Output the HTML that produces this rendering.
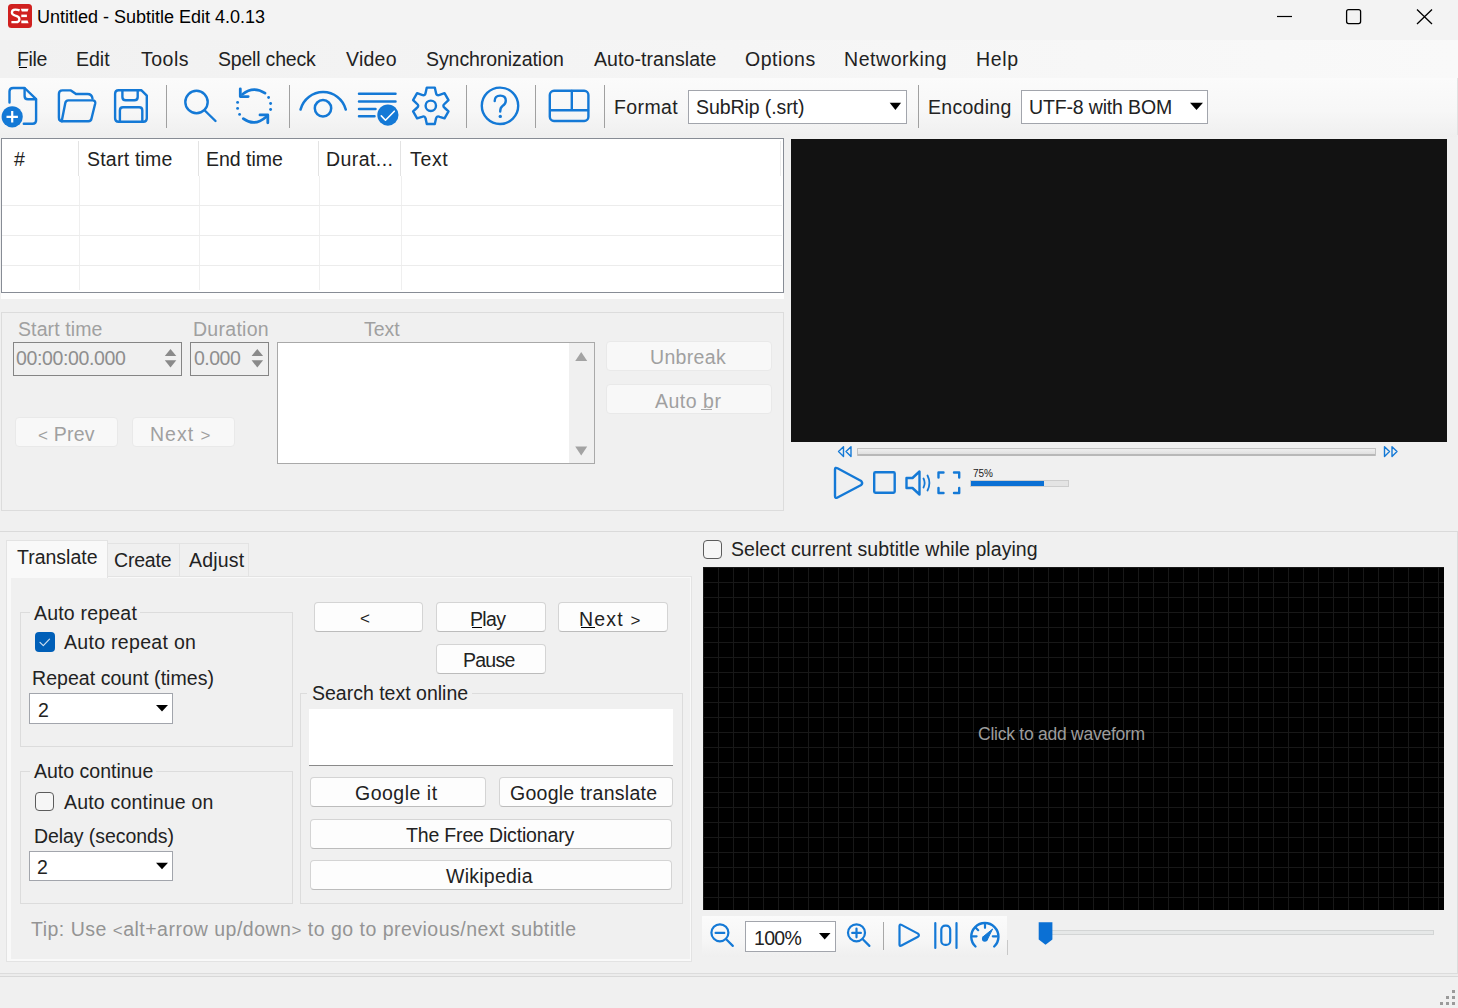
<!DOCTYPE html>
<html><head><meta charset="utf-8"><title>Untitled - Subtitle Edit 4.0.13</title>
<style>
html,body{margin:0;padding:0}
body{width:1458px;height:1008px;overflow:hidden;position:relative;background:#f0f0f0;font-family:"Liberation Sans",sans-serif}
.a{position:absolute;box-sizing:border-box}
.t{position:absolute;white-space:pre;line-height:20px;font-family:"Liberation Sans",sans-serif}
.btn{position:absolute;box-sizing:border-box;background:#fdfdfd;border:1px solid #d4d4d4;border-bottom-color:#bcbcbc;border-radius:4px}
.dbtn{position:absolute;box-sizing:border-box;background:#f8f8f8;border:1px solid #e9e9e9;border-radius:4px}
.grp{position:absolute;box-sizing:border-box;border:1px solid #dcdcdc}
.sep{position:absolute;width:1px;background:#a0a0a0}
.cmb{position:absolute;box-sizing:border-box;background:#fff;border:1px solid #a2a5ac}
svg{position:absolute;left:0;top:0;overflow:visible}
</style></head><body>
<!-- title bar -->
<div class="a" style="left:0;top:0;width:1458px;height:40px;background:#f3f3f3"></div>
<!-- menu bar -->
<div class="a" style="left:0;top:40px;width:1458px;height:38px;background:linear-gradient(to right,#f1f1f1,#f9f9f9)"></div>
<!-- toolbar -->
<div class="a" style="left:0;top:78px;width:1458px;height:59px;background:linear-gradient(#fbfbfb,#f7f7f7 55%,#efefef)"></div>
<div class="a" style="left:1457px;top:78px;width:1px;height:57px;background:#e2e2e2"></div>

<!-- toolbar separators -->
<div class="sep" style="left:166px;top:85px;height:43px"></div>
<div class="sep" style="left:289px;top:85px;height:43px"></div>
<div class="sep" style="left:466px;top:85px;height:43px"></div>
<div class="sep" style="left:535px;top:85px;height:43px"></div>
<div class="sep" style="left:604px;top:85px;height:43px"></div>
<div class="sep" style="left:918px;top:85px;height:43px"></div>
<!-- format / encoding combos -->
<div class="cmb" style="left:688px;top:90px;width:219px;height:34px"></div>
<div class="cmb" style="left:1021px;top:90px;width:187px;height:34px"></div>

<!-- subtitle list -->
<div class="a" style="left:1px;top:293px;width:783px;height:6px;background:#fdfdfd"></div>
<div class="a" style="left:1px;top:138px;width:783px;height:155px;background:#fff;border:1px solid #878c95"></div>
<div class="a" style="left:78px;top:141px;width:1px;height:35px;background:#e3e3e3"></div>
<div class="a" style="left:198px;top:141px;width:1px;height:35px;background:#e3e3e3"></div>
<div class="a" style="left:318px;top:141px;width:1px;height:35px;background:#e3e3e3"></div>
<div class="a" style="left:400px;top:141px;width:1px;height:35px;background:#e3e3e3"></div>
<div class="a" style="left:780px;top:141px;width:1px;height:35px;background:#ececec"></div>
<div class="a" style="left:79px;top:176px;width:1px;height:114px;background:#efefef"></div>
<div class="a" style="left:199px;top:176px;width:1px;height:114px;background:#efefef"></div>
<div class="a" style="left:319px;top:176px;width:1px;height:114px;background:#efefef"></div>
<div class="a" style="left:401px;top:176px;width:1px;height:114px;background:#efefef"></div>
<div class="a" style="left:2px;top:205px;width:780px;height:1px;background:#ececec"></div>
<div class="a" style="left:2px;top:235px;width:780px;height:1px;background:#ececec"></div>
<div class="a" style="left:2px;top:265px;width:780px;height:1px;background:#ececec"></div>

<!-- edit panel -->
<div class="grp" style="left:1px;top:312px;width:783px;height:199px"></div>
<div class="a" style="left:13px;top:342px;width:169px;height:34px;border:1px solid #858585"></div>
<div class="a" style="left:190px;top:342px;width:79px;height:34px;border:1px solid #858585"></div>
<div class="a" style="left:277px;top:342px;width:318px;height:122px;background:#fff;border:1px solid #a9a9a9"></div>
<div class="a" style="left:569px;top:343px;width:25px;height:120px;background:#f0f0f0"></div>
<div class="dbtn" style="left:606px;top:341px;width:166px;height:30px"></div>
<div class="dbtn" style="left:606px;top:384px;width:166px;height:30px"></div>
<div class="dbtn" style="left:15px;top:417px;width:103px;height:30px"></div>
<div class="dbtn" style="left:132px;top:417px;width:103px;height:30px"></div>

<!-- video -->
<div class="a" style="left:791px;top:139px;width:656px;height:303px;background:#121212"></div>
<div class="a" style="left:857px;top:448px;width:519px;height:8px;background:linear-gradient(#efefef,#e0e0e0);border:1px solid #c2c2c2;border-bottom:2px solid #b8b8b8;border-radius:1px"></div>
<div class="a" style="left:970px;top:480px;width:99px;height:7px;background:#e4e4e4;border:1px solid #cdcdcd"></div>
<div class="a" style="left:971px;top:481px;width:73px;height:5px;background:#0b70d4"></div>

<!-- splitter -->
<div class="a" style="left:0;top:531px;width:1458px;height:1px;background:#dadada"></div>
<div class="a" style="left:1457px;top:532px;width:1px;height:441px;background:#dcdcdc"></div>

<!-- tabs -->
<div class="a" style="left:107px;top:543px;width:73px;height:34px;background:#f0f0f0;border:1px solid #e3e3e3;border-bottom:none"></div>
<div class="a" style="left:179px;top:543px;width:70px;height:34px;background:#f0f0f0;border:1px solid #e3e3e3;border-bottom:none"></div>
<div class="a" style="left:6px;top:576px;width:686px;height:386px;background:#f9f9f9;border:1px solid #e3e3e3"></div>
<div class="a" style="left:6px;top:540px;width:102px;height:39px;background:#f9f9f9;border:1px solid #e3e3e3;border-bottom:none"></div>
<div class="a" style="left:11px;top:578px;width:679px;height:381px;background:#f0f0f0"></div>

<!-- groups -->
<div class="grp" style="left:20px;top:612px;width:273px;height:135px"></div>
<div class="grp" style="left:20px;top:771px;width:273px;height:133px"></div>
<div class="grp" style="left:300px;top:693px;width:383px;height:211px"></div>
<div class="a" style="left:30px;top:600px;width:110px;height:20px;background:#f0f0f0"></div>
<div class="a" style="left:30px;top:760px;width:126px;height:20px;background:#f0f0f0"></div>
<div class="a" style="left:307px;top:682px;width:165px;height:20px;background:#f0f0f0"></div>

<!-- checkboxes -->
<div class="a" style="left:35px;top:632px;width:19.5px;height:20px;background:#005fb8;border-radius:4px"></div>
<div class="a" style="left:35px;top:792px;width:19px;height:19px;background:#f6f6f6;border:1px solid #5c5c5c;border-radius:4px"></div>
<div class="a" style="left:703px;top:540px;width:19px;height:19px;background:#f6f6f6;border:1px solid #5c5c5c;border-radius:4px"></div>

<!-- combos -->
<div class="cmb" style="left:29px;top:693px;width:144px;height:31px"></div>
<div class="cmb" style="left:29px;top:851px;width:144px;height:30px"></div>

<!-- buttons -->
<div class="btn" style="left:314px;top:602px;width:109px;height:30px"></div>
<div class="btn" style="left:436px;top:602px;width:110px;height:30px"></div>
<div class="btn" style="left:558px;top:602px;width:110px;height:30px"></div>
<div class="btn" style="left:436px;top:644px;width:110px;height:30px"></div>
<div class="a" style="left:309px;top:709px;width:364px;height:57px;background:#fff;border-bottom:1px solid #8a8a8a"></div>
<div class="btn" style="left:310px;top:777px;width:176px;height:30px"></div>
<div class="btn" style="left:499px;top:777px;width:174px;height:30px"></div>
<div class="btn" style="left:310px;top:819px;width:362px;height:30px"></div>
<div class="btn" style="left:310px;top:860px;width:362px;height:30px"></div>

<!-- waveform -->
<div class="a" style="left:703px;top:567px;width:741px;height:343px;background-color:#000;background-image:repeating-linear-gradient(to right,#181818 0,#181818 1px,transparent 1px,transparent 15px),repeating-linear-gradient(to bottom,#181818 0,#181818 1px,transparent 1px,transparent 15px)"></div>
<div class="a" style="left:702px;top:916px;width:305px;height:41px;background:linear-gradient(#fbfbfb,#f6f6f6 60%,#efefef)"></div>
<div class="a" style="left:1007px;top:940px;width:1px;height:15px;background:#c8c8c8"></div>
<div class="cmb" style="left:745px;top:921px;width:91px;height:31px"></div>
<div class="a" style="left:883px;top:922px;width:1px;height:28px;background:#a8a8a8"></div>
<div class="a" style="left:1046px;top:930px;width:388px;height:5px;background:#e6e8e8;border:1px solid #d3d5d5"></div>

<!-- status bar -->
<div class="a" style="left:0;top:973px;width:1458px;height:1px;background:#dcdcdc"></div>
<div class="a" style="left:0;top:974px;width:1458px;height:2px;background:#ececec"></div>
<div class="a" style="left:0;top:976px;width:1458px;height:1px;background:#d8d8d8"></div>
<div class="a" style="left:0;top:977px;width:1458px;height:31px;background:#f0f0f0"></div>

<svg width="1458" height="1008" viewBox="0 0 1458 1008">
 <!-- app icon -->
 <rect x="8" y="4" width="24" height="24" rx="3.5" fill="#d0201f"/>
 <path d="M19.6 10.4 C18.4 9.9 16.9 9.7 15.2 9.7 C13.0 9.7 11.9 10.9 11.9 12.6 C11.9 14.4 13.4 15.2 15.4 15.7 C17.7 16.2 19.4 17.0 19.4 19.2 C19.4 21.2 17.9 22.2 15.8 22.2 L11.4 22.2" fill="none" stroke="#fff" stroke-width="2.3"/>
 <path d="M20.8 8.7 L28.6 8.7 L27.6 11.4 L21.8 11.4 Z" fill="#fff"/>
 <rect x="21.3" y="14.6" width="5.6" height="2.5" fill="#fff"/>
 <path d="M21.3 20.4 L27.6 20.4 L28.6 23.3 L21.3 23.3 Z" fill="#fff"/>

 <!-- window controls -->
 <line x1="1277" y1="16.5" x2="1292" y2="16.5" stroke="#000" stroke-width="1.2"/>
 <rect x="1346.6" y="9.6" width="14" height="14" rx="2" fill="none" stroke="#000" stroke-width="1.3"/>
 <path d="M1417 9.5 L1432 24 M1432 9.5 L1417 24" stroke="#000" stroke-width="1.3" fill="none"/>

 <!-- menu underline File -->
 <rect x="19" y="67" width="8" height="1" fill="#000"/>

 <g fill="none" stroke="#1479d6" stroke-width="2.4" stroke-linecap="round" stroke-linejoin="round">
  <!-- new -->
  <path d="M9.5 102.6 L9.5 91.6 Q9.5 88 13.1 88 L24.6 88 L36.1 99.2 L36.1 120.3 Q36.1 123.8 32.6 123.8 L23.8 123.8"/>
  <path d="M24.6 88.2 L24.6 96 Q24.6 99.3 27.9 99.3 L36 99.3"/>
  <!-- open -->
  <path d="M61.8 121.3 Q58.9 121 58.9 117.5 L58.9 94 Q58.9 90.4 62.5 90.4 L70.9 90.4 L76 94 L87.5 94 Q92 94 92.5 98.6"/>
  <path d="M62 121.3 L88.5 121.3 Q91 121.3 91.5 118.5 L95.2 103.5 Q95.8 100.4 92.6 100.4 L68.3 100.4 Q65.8 100.4 65.3 103 L61.8 120.8"/>
  <!-- save -->
  <path d="M118.6 90.3 L141.5 90.3 L146.8 95.6 L146.8 118.2 Q146.8 121.7 143.3 121.7 L118.6 121.7 Q115.1 121.7 115.1 118.2 L115.1 93.8 Q115.1 90.3 118.6 90.3 Z"/>
  <path d="M122.4 90.2 L122.4 97 Q122.4 100.3 125.7 100.3 L134.4 100.3 Q137.7 100.3 137.7 97 L137.7 90.2"/>
  <path d="M119.9 121.5 L119.9 110.4 Q119.9 107.3 123 107.3 L139.2 107.3 Q142.3 107.3 142.3 110.4 L142.3 121.5"/>
  <!-- search -->
  <circle cx="196.5" cy="102" r="11.2"/>
  <path d="M204.8 110.5 L215.5 121"/>
  <!-- sync -->
  <path d="M242.5 94.2 Q253.5 85.5 265 93.2" stroke-width="2.7"/>
  <path d="M240.3 88.8 L240.3 96.6 L248.2 96.6" stroke-width="2.8"/>
  <path d="M243.3 118.6 Q254.5 127 266 117" stroke-width="2.7"/>
  <path d="M260 114.9 L267.8 114.9 L267.8 122.8" stroke-width="2.8"/>
  <!-- eye -->
  <path d="M300.5 109.6 A23.4 23.4 0 0 1 345.8 109.6" stroke-width="2.5"/>
  <circle cx="323" cy="108.3" r="8.2" stroke-width="2.5"/>
  <!-- list check -->
  <path d="M359 93.7 L395.5 93.7 M359 101.4 L395.5 101.4 M359 109.1 L375.5 109.1 M359 116.3 L374.5 116.3" stroke-width="2.5"/>
  <!-- help -->
  <circle cx="500" cy="105.8" r="18.2"/>
  <path d="M494.7 101 Q494.7 95.6 500.3 95.6 Q505.8 95.6 505.8 100.8 Q505.8 104 502.5 106 Q500.2 107.6 500.2 111.5"/>
  <!-- layout -->
  <rect x="549.8" y="90.8" width="38.6" height="30.2" rx="4.2"/>
  <path d="M551 110.3 L588 110.3 M571.8 91 L571.8 110.3"/>
 </g>
 <!-- sync arrows and dots -->
 <g fill="#1479d6">
  <circle cx="237.6" cy="102.4" r="1.45"/><circle cx="237.6" cy="108.4" r="1.45"/><circle cx="239.6" cy="114.4" r="1.4"/>
  <circle cx="268.6" cy="97.5" r="1.4"/><circle cx="270.6" cy="103.5" r="1.45"/><circle cx="270.6" cy="109.5" r="1.45"/>
  <!-- new plus circle -->
  <circle cx="12.2" cy="116.8" r="10.6"/>
  <!-- list check circle -->
  <circle cx="387.9" cy="115.1" r="10.6"/>
  <!-- help dot -->
  <circle cx="500.3" cy="116.4" r="1.7"/>
 </g>
 <path d="M6.5 116.8 L17.9 116.8 M12.2 111.1 L12.2 122.5" stroke="#fff" stroke-width="2.2" fill="none"/>
 <path d="M381.3 115.9 L385.5 120.2 L394.3 111.2" stroke="#fff" stroke-width="1.6" fill="none" stroke-linecap="round" stroke-linejoin="round"/>
 <!-- gear -->
 <path fill="none" stroke="#1479d6" stroke-width="2.4" stroke-linejoin="round" d="M425.7 92.5 L426.8 87.6 L434.8 87.6 L435.9 92.5 Q436.4 96.2 439.7 94.8 L444.5 93.2 L448.5 100.2 L444.8 103.6 Q441.9 105.8 444.8 108.0 L448.5 111.4 L444.5 118.4 L439.7 116.8 Q436.4 115.4 435.9 119.1 L434.8 124.0 L426.8 124.0 L425.7 119.1 Q425.2 115.4 421.9 116.8 L417.1 118.4 L413.1 111.4 L416.8 108.0 Q419.7 105.8 416.8 103.6 L413.1 100.2 L417.1 93.2 L421.9 94.8 Q425.2 96.2 425.7 92.5 Z"/>
 <circle cx="430.8" cy="105.8" r="5.2" fill="none" stroke="#1479d6" stroke-width="2.4"/>

 <!-- combo arrows -->
 <path d="M889.7 102.7 L901.1 102.7 L895.4 109.9 Z" fill="#000"/>
 <path d="M1190 102.7 L1203 102.7 L1196.5 109.9 Z" fill="#000"/>
 <path d="M156 705 L168 705 L162 711.5 Z" fill="#000"/>
 <path d="M156 862.8 L168 862.8 L162 869.3 Z" fill="#000"/>
 <path d="M819 933 L830.5 933 L824.7 939.5 Z" fill="#000"/>

 <!-- spinner arrows -->
 <g fill="#8a8a8a">
  <path d="M164.8 356 L176.3 356 L170.5 349 Z"/><path d="M164.8 360.3 L176.3 360.3 L170.5 367.6 Z"/>
  <path d="M251.6 356 L263.1 356 L257.3 349 Z"/><path d="M251.6 360.3 L263.1 360.3 L257.3 367.6 Z"/>
 </g>
 <g fill="#a3a3a3">
  <path d="M575.2 360.9 L587.2 360.9 L581.2 352 Z"/><path d="M575.2 446.6 L587.2 446.6 L581.2 455.5 Z"/>
 </g>
 <!-- underline Auto br -->
 <rect x="701" y="409" width="11" height="1" fill="#a8a8a8"/>
 <!-- underline Play, Next -->
 <rect x="472" y="627" width="10" height="1" fill="#000"/>
 <rect x="581" y="627" width="14" height="1" fill="#000"/>

 <!-- video controls -->
 <g fill="none" stroke="#1479d6" stroke-width="1.4" stroke-linejoin="round">
  <path d="M838.5 451.5 L843.5 446.8 L843.5 456.5 Z M846 451.5 L851 446.8 L851 456.5 Z"/>
  <path d="M1397 451.5 L1392 446.8 L1392 456.5 Z M1389.5 451.5 L1384.5 446.8 L1384.5 456.5 Z"/>
 </g>
 <g fill="none" stroke="#1479d6" stroke-width="2.4" stroke-linejoin="round" stroke-linecap="round">
  <path d="M835 469.5 Q835 467 837.5 468.3 L861.2 481 Q863.2 483 861.2 485 L837.5 497.5 Q835 498.8 835 496 Z"/>
  <rect x="874.2" y="472.2" width="20.5" height="20.6" rx="1.2"/>
  <path d="M906.5 478 L912.5 478 L919.5 471.5 L919.5 494.5 L912.5 488 L906.5 488 Z"/>
  <path d="M923.5 478.5 Q925.8 483 923.5 487.5 M927.5 475.5 Q931.3 483 927.5 490.5" stroke-width="1.8"/>
  <path d="M938.5 477.5 L938.5 472.5 L943.5 472.5 M954 472.5 L959.2 472.5 L959.2 477.5 M959.2 488 L959.2 493 L954 493 M943.5 493 L938.5 493 L938.5 488"/>
 </g>

 <!-- checkmark auto repeat -->
 <path d="M40 642.3 L43.3 645.6 L49.5 639.2" stroke="#fff" stroke-opacity="0.8" stroke-width="1.2" fill="none" stroke-linecap="round" stroke-linejoin="round"/>

 <!-- waveform toolbar icons -->
 <g fill="none" stroke="#1479d6" stroke-width="2.2" stroke-linecap="round" stroke-linejoin="round">
  <circle cx="719.9" cy="932.8" r="8.5"/>
  <path d="M726.2 939.3 L732.8 945.9 M715.6 932.9 L724.3 932.9"/>
  <circle cx="856.5" cy="932.8" r="8.5"/>
  <path d="M862.8 939.3 L869.4 945.9 M852.2 932.9 L860.9 932.9 M856.5 928.5 L856.5 937.3"/>
  <path d="M899.5 926 Q899.5 923.8 901.5 924.9 L918 933.6 Q919.8 935.2 918 936.8 L901.5 945.5 Q899.5 946.6 899.5 944.4 Z"/>
  <path d="M935.3 923 L935.3 948"/>
  <path d="M956.5 923 L956.5 948"/>
  <rect x="941.3" y="925.6" width="8.9" height="19.3" rx="4"/>
  <path d="M975.5 946.5 A13.6 13.6 0 1 1 994.2 946.5" stroke-width="2.4"/>
  <path d="M985 924.8 L985 927.8 M972.6 936.3 L976.6 936.3 M992.8 936.3 L996.8 936.3 M976 928 L978.2 930.2" stroke-width="2.2"/>
 </g>
 <path d="M992.6 929 L986.9 940.5 L982.7 937.1 Z" fill="#1479d6" stroke="#1479d6" stroke-width="1" stroke-linejoin="round"/>
 <circle cx="984.8" cy="938.8" r="2.9" fill="#1479d6"/>
 <!-- slider thumb -->
 <path d="M1038.7 922.2 L1052.4 922.2 L1052.4 939.5 L1045.5 944.8 L1038.7 939.5 Z" fill="#0b70d4"/>
 <!-- grip -->
 <g fill="#9a9a9a">
  <rect x="1452" y="990" width="3" height="3"/>
  <rect x="1446" y="996" width="3" height="3"/><rect x="1452" y="996" width="3" height="3"/>
  <rect x="1440" y="1002" width="3" height="3"/><rect x="1446" y="1002" width="3" height="3"/><rect x="1452" y="1002" width="3" height="3"/>
 </g>
</svg>
<span class="t" style="left:37px;top:7px;font-size:18px;color:#000;">Untitled - Subtitle Edit 4.0.13</span>
<span class="t" style="left:17px;top:49px;font-size:19.5px;letter-spacing:-0.333px;color:#222;">File</span>
<span class="t" style="left:76px;top:49px;font-size:19.5px;color:#222;">Edit</span>
<span class="t" style="left:141px;top:49px;font-size:19.5px;letter-spacing:0.5px;color:#222;">Tools</span>
<span class="t" style="left:218px;top:49px;font-size:19.5px;letter-spacing:-0.2px;color:#222;">Spell check</span>
<span class="t" style="left:346px;top:49px;font-size:19.5px;letter-spacing:0.25px;color:#222;">Video</span>
<span class="t" style="left:426px;top:49px;font-size:19.5px;letter-spacing:-0.071px;color:#222;">Synchronization</span>
<span class="t" style="left:594px;top:49px;font-size:19.5px;letter-spacing:0.077px;color:#222;">Auto-translate</span>
<span class="t" style="left:745px;top:49px;font-size:19.5px;letter-spacing:0.5px;color:#222;">Options</span>
<span class="t" style="left:844px;top:49px;font-size:19.5px;letter-spacing:0.556px;color:#222;">Networking</span>
<span class="t" style="left:976px;top:49px;font-size:19.5px;letter-spacing:0.667px;color:#222;">Help</span>
<span class="t" style="left:614px;top:97px;font-size:19.5px;letter-spacing:0.4px;color:#222;">Format</span>
<span class="t" style="left:696px;top:97px;font-size:19.5px;letter-spacing:-0.083px;color:#222;">SubRip (.srt)</span>
<span class="t" style="left:928px;top:97px;font-size:19.5px;letter-spacing:0.286px;color:#222;">Encoding</span>
<span class="t" style="left:1029px;top:97px;font-size:19.5px;letter-spacing:-0.154px;color:#222;">UTF-8 with BOM</span>
<span class="t" style="left:14px;top:149px;font-size:19.5px;color:#222;">#</span>
<span class="t" style="left:87px;top:149px;font-size:19.5px;letter-spacing:0.222px;color:#222;">Start time</span>
<span class="t" style="left:206px;top:149px;font-size:19.5px;color:#222;">End time</span>
<span class="t" style="left:326px;top:149px;font-size:19.5px;letter-spacing:0.429px;color:#222;">Durat...</span>
<span class="t" style="left:410px;top:149px;font-size:19.5px;letter-spacing:0.667px;color:#222;">Text</span>
<span class="t" style="left:18px;top:319px;font-size:19.5px;letter-spacing:0.111px;color:#a0a0a0;">Start time</span>
<span class="t" style="left:193px;top:319px;font-size:19.5px;letter-spacing:0.286px;color:#a0a0a0;">Duration</span>
<span class="t" style="left:364px;top:319px;font-size:19.5px;color:#a0a0a0;">Text</span>
<span class="t" style="left:16px;top:348px;font-size:19.5px;letter-spacing:-0.364px;color:#8e8e8e;">00:00:00.000</span>
<span class="t" style="left:194px;top:348px;font-size:19.5px;letter-spacing:-0.5px;color:#8e8e8e;">0.000</span>
<span class="t" style="left:650px;top:347px;font-size:19.5px;letter-spacing:0.333px;color:#a0a0a0;">Unbreak</span>
<span class="t" style="left:655px;top:391px;font-size:19.5px;letter-spacing:0.5px;color:#a0a0a0;">Auto br</span>
<span class="t" style="left:38px;top:424px;font-size:19.5px;letter-spacing:0.2px;color:#a0a0a0;"><span style='font-size:17px'>&lt;</span> Prev</span>
<span class="t" style="left:150px;top:424px;font-size:19.5px;letter-spacing:1.0px;color:#a0a0a0;">Next <span style='font-size:17px'>&gt;</span></span>
<span class="t" style="left:973px;top:464px;font-size:10px;color:#222;">75%</span>
<span class="t" style="left:17px;top:547px;font-size:19.5px;color:#222;">Translate</span>
<span class="t" style="left:114px;top:550px;font-size:19.5px;letter-spacing:-0.2px;color:#222;">Create</span>
<span class="t" style="left:189px;top:550px;font-size:19.5px;letter-spacing:0.2px;color:#222;">Adjust</span>
<span class="t" style="left:34px;top:603px;font-size:19.5px;letter-spacing:0.2px;color:#222;">Auto repeat</span>
<span class="t" style="left:64px;top:632px;font-size:19.5px;letter-spacing:0.308px;color:#222;">Auto repeat on</span>
<span class="t" style="left:32px;top:668px;font-size:19.5px;letter-spacing:0.053px;color:#222;">Repeat count (times)</span>
<span class="t" style="left:38px;top:700px;font-size:19.5px;color:#222;">2</span>
<span class="t" style="left:34px;top:761px;font-size:19.5px;color:#222;">Auto continue</span>
<span class="t" style="left:64px;top:792px;font-size:19.5px;letter-spacing:0.2px;color:#222;">Auto continue on</span>
<span class="t" style="left:34px;top:826px;font-size:19.5px;letter-spacing:-0.071px;color:#222;">Delay (seconds)</span>
<span class="t" style="left:37px;top:857px;font-size:19.5px;color:#222;">2</span>
<span class="t" style="left:31px;top:919px;font-size:19.5px;letter-spacing:0.492px;color:#949494;">Tip: Use <span style='font-size:17px'>&lt;</span>alt+arrow up/down<span style='font-size:17px'>&gt;</span> to go to previous/next subtitle</span>
<span class="t" style="left:360px;top:607px;font-size:19.5px;color:#222;"><span style='font-size:17px'>&lt;</span></span>
<span class="t" style="left:470px;top:609px;font-size:19.5px;letter-spacing:-0.667px;color:#222;">Play</span>
<span class="t" style="left:579px;top:609px;font-size:19.5px;letter-spacing:1.2px;color:#222;">Next <span style='font-size:17px'>&gt;</span></span>
<span class="t" style="left:463px;top:650px;font-size:19.5px;letter-spacing:-0.75px;color:#222;">Pause</span>
<span class="t" style="left:312px;top:683px;font-size:19.5px;color:#222;">Search text online</span>
<span class="t" style="left:355px;top:783px;font-size:19.5px;letter-spacing:0.5px;color:#222;">Google it</span>
<span class="t" style="left:510px;top:783px;font-size:19.5px;letter-spacing:0.267px;color:#222;">Google translate</span>
<span class="t" style="left:406px;top:825px;font-size:19.5px;letter-spacing:-0.167px;color:#222;">The Free Dictionary</span>
<span class="t" style="left:446px;top:866px;font-size:19.5px;letter-spacing:0.25px;color:#222;">Wikipedia</span>
<span class="t" style="left:731px;top:539px;font-size:19.5px;letter-spacing:0.056px;color:#222;">Select current subtitle while playing</span>
<span class="t" style="left:978px;top:724px;font-size:17.5px;letter-spacing:-0.25px;color:#9c9c9c;">Click to add waveform</span>
<span class="t" style="left:754px;top:928px;font-size:19.5px;letter-spacing:-0.667px;color:#222;">100%</span>
</body></html>
